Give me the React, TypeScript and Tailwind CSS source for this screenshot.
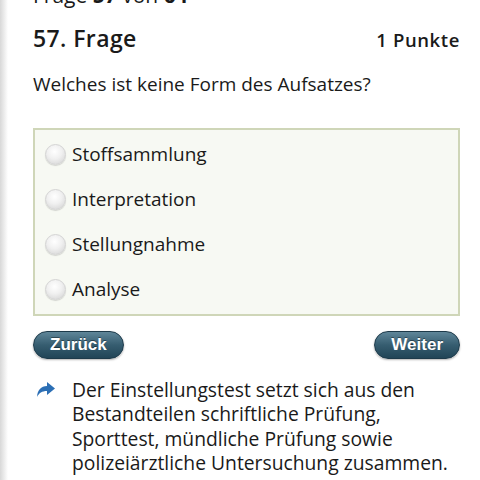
import React from 'react';

const OPTIONS = ['Stoffsammlung', 'Interpretation', 'Stellungnahme', 'Analyse'];

function Radio() {
  return (
    <span className="w-[21px] h-[21px] rounded-full shrink-0 border border-[#d4d4d4] bg-[radial-gradient(circle_at_45%_35%,#ffffff_0%,#f0f0f0_45%,#cfcfcf_100%)] shadow-[0_1px_1px_rgba(0,0,0,0.15)]" />
  );
}

function NavButton({ label }: { label: string }) {
  return (
    <button className="h-[28px] px-[16px] rounded-full border border-[#1d3a4a] bg-gradient-to-b from-[#5f8699] via-[#365d70] to-[#214557] text-white text-[17px] font-bold font-['Liberation_Sans',Arial,sans-serif] leading-none shadow-[0_1px_2px_rgba(0,0,0,0.3)] [text-shadow:0_-1px_0_rgba(0,0,0,0.4)]">
      {label}
    </button>
  );
}

export default function App() {
  return (
    <div className="relative w-[480px] h-[480px] overflow-hidden bg-white font-['Open_Sans',sans-serif] text-[#1a1a1a]">
      <div className="absolute left-0 top-0 bottom-0 w-[8px] bg-gradient-to-r from-[#d8d8d8] to-white" />
      <div className="pl-[33px] pr-[20px]">
        <p className="-mt-[19px] text-[21px] leading-[28px]">
          Frage <b>57</b> von <b>64</b>
        </p>
        <div className="flex items-baseline justify-between mt-[12px]">
          <h1 className="text-[23px] font-semibold tracking-[0.4px]">57. Frage</h1>
          <span className="text-[18.5px] font-semibold tracking-[0.6px]">1 Punkte</span>
        </div>
        <p className="mt-[15px] text-[19px] leading-[26px]">Welches ist keine Form des Aufsatzes?</p>

        <div className="mt-[31px] border-2 border-[#cfd6b8] bg-[#f7f9f3] py-[2px] px-[10px]">
          {OPTIONS.map((o) => (
            <div key={o} className="flex items-center gap-[6px] h-[45px]">
              <Radio />
              <span className="text-[19px]">{o}</span>
            </div>
          ))}
        </div>

        <div className="flex justify-between mt-[15px]">
          <NavButton label="Zurück" />
          <NavButton label="Weiter" />
        </div>

        <div className="flex gap-[16px] mt-[19px]">
          <svg width="20" height="18" viewBox="0 0 20 18" className="shrink-0 mt-[3px] ml-[3px]">
            <path d="M11 1 L19 7.5 L11 14 L11 10 C6 10 3 12 1 16 C1.5 9 5 5 11 5 Z" fill="#2c6fb5" />
          </svg>
          <p className="text-[19.3px] leading-[24.5px]">
            Der Einstellungstest setzt sich aus den Bestandteilen schriftliche Prüfung, Sporttest, mündliche Prüfung sowie polizeiärztliche Untersuchung zusammen. Dabei muss der Arbeitsplatz stets gewährleistet sein.
          </p>
        </div>
      </div>
    </div>
  );
}
